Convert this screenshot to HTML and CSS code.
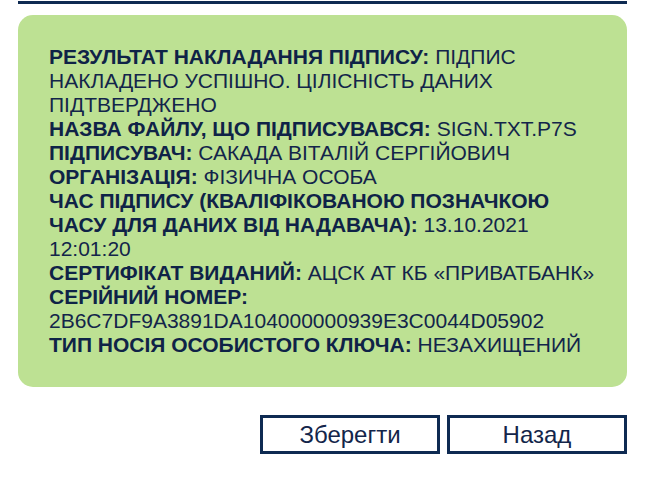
FILE: index.html
```html
<!DOCTYPE html>
<html lang="uk">
<head>
<meta charset="utf-8">
<link rel="stylesheet" href="styles.css">
</head>
<body>
<div class="page">
  <div class="rule"></div>
  <div class="result">
    <p><b>РЕЗУЛЬТАТ НАКЛАДАННЯ ПІДПИСУ:</b> ПІДПИС НАКЛАДЕНО УСПІШНО. ЦІЛІСНІСТЬ ДАНИХ ПІДТВЕРДЖЕНО</p>
    <p><b>НАЗВА ФАЙЛУ, ЩО ПІДПИСУВАВСЯ:</b> SIGN.TXT.P7S</p>
    <p><b>ПІДПИСУВАЧ:</b> САКАДА ВІТАЛІЙ СЕРГІЙОВИЧ</p>
    <p><b>ОРГАНІЗАЦІЯ:</b> ФІЗИЧНА ОСОБА</p>
    <p><b>ЧАС ПІДПИСУ (КВАЛІФІКОВАНОЮ ПОЗНАЧКОЮ ЧАСУ ДЛЯ ДАНИХ ВІД НАДАВАЧА):</b> 13.10.2021 12:01:20</p>
    <p><b>СЕРТИФІКАТ ВИДАНИЙ:</b> АЦСК АТ КБ «ПРИВАТБАНК»</p>
    <p><b>СЕРІЙНИЙ НОМЕР:</b> 2B6C7DF9A3891DA104000000939E3C0044D05902</p>
    <p><b>ТИП НОСІЯ ОСОБИСТОГО КЛЮЧА:</b> НЕЗАХИЩЕНИЙ</p>
  </div>
  <div class="actions">
    <button class="btn">Зберегти</button>
    <button class="btn">Назад</button>
  </div>
</div>
</body>
</html>
```
FILE: styles.css
```css
html, body {
  margin: 0;
  padding: 0;
  background: #ffffff;
}
.page {
  padding: 1px 20px 0 18px;
  font-family: "Liberation Sans", Arial, sans-serif;
}
.rule {
  height: 3px;
  background: #0e2a52;
}
.result {
  margin-top: 11px;
  background: #bde193;
  border-radius: 15px;
  padding: 30px 31px;
  color: #13254a;
  font-size: 21px;
  line-height: 24px;
}
.result p {
  margin: 0;
}
.result b {
  font-weight: bold;
  color: #0f2347;
}
.actions {
  margin-top: 28px;
  display: flex;
  justify-content: flex-end;
  gap: 7px;
}
.btn {
  width: 180px;
  height: 39px;
  border: 3px solid #0e2a52;
  background: #ffffff;
  color: #13254a;
  font-family: "Liberation Sans", Arial, sans-serif;
  font-size: 24px;
  line-height: 1;
  padding: 0;
  margin: 0;
}
```
